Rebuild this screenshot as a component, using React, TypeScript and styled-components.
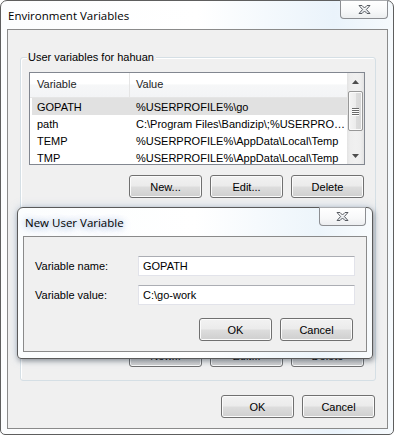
import React from "react";
import styled, { createGlobalStyle } from "styled-components";

const uiFont = `"Liberation Sans", Arial, sans-serif`;
const captionFont = `"Open Sans", "Noto Sans", sans-serif`;

const GlobalStyle = createGlobalStyle`
  html, body {
    margin: 0;
    padding: 0;
    background: #ffffff;
  }
  body {
    font-family: ${uiFont};
    font-size: 11px;
    color: #000;
  }
`;

const rows = [
    { name: "GOPATH", value: "%USERPROFILE%\\go", selected: true },
    { name: "path", value: "C:\\Program Files\\Bandizip\\;%USERPRO…" },
    { name: "TEMP", value: "%USERPROFILE%\\AppData\\Local\\Temp" },
    { name: "TMP", value: "%USERPROFILE%\\AppData\\Local\\Temp" },
];

const CloseGlyph = () => (
    <svg width="13" height="10" viewBox="0 0 13 10">
        <defs>
            <linearGradient id="xfill" x1="0" y1="0" x2="0" y2="1">
                <stop offset="0" stopColor="#ffffff" />
                <stop offset="1" stopColor="#dfe3e8" />
            </linearGradient>
        </defs>
        <polygon
            points="1,0.5 4,0.5 6.5,3 9,0.5 12,0.5 8.4,4.5 12,8.5 9,8.5 6.5,6 4,8.5 1,8.5 4.6,4.5"
            fill="url(#xfill)"
            stroke="#575b61"
            strokeWidth="1"
            strokeLinejoin="round"
        />
    </svg>
);

const Arrow = ({ up }: { up?: boolean }) => (
    <svg width="7" height="4" viewBox="0 0 7 4">
        <polygon points={up ? "0,4 7,4 3.5,0" : "0,0 7,0 3.5,4"} fill="#4d4d4d" />
    </svg>
);

const App = () => {
    return <>
        <GlobalStyle />
        <Window>
            <TitleBar>
                <Title>Environment Variables</Title>
                <CloseButton><CloseGlyph /></CloseButton>
            </TitleBar>
            <Client>
                <GroupBox>
                    <GroupLabel>User variables for hahuan</GroupLabel>
                    <ListView>
                        <ListBody>
                            <HeaderRow>
                                <HeaderCell $width={100}>Variable</HeaderCell>
                                <HeaderCell>Value</HeaderCell>
                            </HeaderRow>
                            {rows.map((row) => (
                                <Row key={row.name} $selected={!!row.selected}>
                                    <NameCell>{row.name}</NameCell>
                                    <ValueCell>{row.value}</ValueCell>
                                </Row>
                            ))}
                        </ListBody>
                        <ScrollBar>
                            <ScrollArrow><Arrow up /></ScrollArrow>
                            <Track>
                                <Thumb>
                                    <Grip /><Grip /><Grip /><Grip />
                                </Thumb>
                            </Track>
                            <ScrollArrow><Arrow /></ScrollArrow>
                        </ScrollBar>
                    </ListView>
                    <ButtonRow $top={10}>
                        <Button>New...</Button>
                        <Button>Edit...</Button>
                        <Button>Delete</Button>
                    </ButtonRow>
                    <ButtonRow $top={146}>
                        <Button>New...</Button>
                        <Button>Edit...</Button>
                        <Button>Delete</Button>
                    </ButtonRow>
                </GroupBox>
                <FooterRow>
                    <Button>OK</Button>
                    <Button>Cancel</Button>
                </FooterRow>
            </Client>

            <Dialog>
                <TitleBar>
                    <DialogTitle>New User Variable</DialogTitle>
                    <CloseButton $dialog><CloseGlyph /></CloseButton>
                </TitleBar>
                <DialogClient>
                    <FieldGrid>
                        <FieldLabel>Variable name:</FieldLabel>
                        <TextBox defaultValue="GOPATH" />
                        <FieldLabel>Variable value:</FieldLabel>
                        <TextBox defaultValue="C:\go-work" />
                    </FieldGrid>
                    <DialogButtons>
                        <Button>OK</Button>
                        <Button>Cancel</Button>
                    </DialogButtons>
                </DialogClient>
            </Dialog>
        </Window>
    </>
}

const Window = styled.div`
    position: relative;
    box-sizing: border-box;
    width: 394px;
    height: 435px;
    padding: 0 5px 5px 6px;

    display: flex;
    flex-direction: column;

    border: 1px solid #5e5e5e;
    border-radius: 7px 7px 5px 5px;
    background: linear-gradient(90deg, #fcfdfe 0%, #ffffff 50%, #eaf3fb 85%, #f6fafd 100%);
`

const TitleBar = styled.div`
    display: flex;
    justify-content: space-between;
    align-items: flex-start;
    height: 28px;
    flex-shrink: 0;
`

const Title = styled.div`
    padding-left: 1px;
    line-height: 29px;
    font-family: ${captionFont};
    font-size: 11.5px;
    color: #000;
`

const DialogTitle = styled(Title)`
    padding-left: 2px;
    text-shadow: 0 0 6px rgba(150, 180, 220, 0.9), 0 2px 7px rgba(150, 180, 220, 0.7);
`

const CloseButton = styled.div<{ $dialog?: boolean }>`
    box-sizing: border-box;
    width: ${(p) => (p.$dialog ? 47 : 48)}px;
    height: 19px;
    margin-top: -1px;
    margin-right: ${(p) => (p.$dialog ? 1 : 0)}px;

    display: flex;
    align-items: center;
    justify-content: center;

    border: 1px solid #8c8e92;
    border-top-color: #a9abae;
    border-radius: 0 0 4px 4px;
    background: linear-gradient(#ffffff 0%, #f7f8f9 60%, #eceef0 100%);
`

const Client = styled.div`
    flex: 1;
    display: flex;
    flex-direction: column;
    padding: 27px 11px 10px 12px;

    border: 1px solid #8a8a8a;
    background-color: #f0f0f0;
`

const GroupBox = styled.div`
    position: relative;
    display: flex;
    flex-direction: column;
    padding: 14px 10px 13px 8px;

    border: 1px solid #d5dfe5;
    border-radius: 3px;
    box-shadow: inset 1px 1px 0 #ffffff;
`

const GroupLabel = styled.div`
    position: absolute;
    top: -8px;
    left: 6px;
    padding: 0 2px 0 1px;
    line-height: 14px;
    background-color: #f0f0f0;
`

const ListView = styled.div`
    display: flex;
    height: 93px;
    box-sizing: border-box;
    overflow: hidden;

    border: 1px solid #828790;
    background-color: #ffffff;
`

const ListBody = styled.div`
    flex: 1;
    min-width: 0;
    overflow: hidden;
`

const HeaderRow = styled.div`
    display: flex;
    box-sizing: border-box;
    height: 25px;

    border-bottom: 1px solid #e5e5e5;
    background: linear-gradient(#ffffff 0%, #ffffff 45%, #f6f7f8 50%, #f3f4f6 100%);
`

const HeaderCell = styled.div<{ $width?: number }>`
    box-sizing: border-box;
    ${(p) => (p.$width ? `width: ${p.$width}px; border-right: 1px solid #e5e5e5;` : "flex: 1;")}
    padding-left: ${(p) => (p.$width ? 7 : 6)}px;
    line-height: 23px;
    color: #1e1e1e;
`

const Row = styled.div<{ $selected: boolean }>`
    display: flex;
    height: 17px;
    margin-left: 2px;
    align-items: center;
    background-color: ${(p) => (p.$selected ? "#e1e1e1" : "transparent")};
`

const NameCell = styled.div`
    width: 98px;
    padding-left: 5px;
    box-sizing: border-box;
    white-space: nowrap;
`

const ValueCell = styled.div`
    flex: 1;
    padding-left: 6px;
    white-space: nowrap;
    overflow: hidden;
`

const ScrollBar = styled.div`
    width: 17px;
    display: flex;
    flex-direction: column;
    background: linear-gradient(90deg, #e3e3e3 0%, #eeeeee 20%, #f0f0f0 50%, #eeeeee 80%, #e3e3e3 100%);
`

const ScrollArrow = styled.div`
    height: 17px;
    display: flex;
    align-items: center;
    justify-content: center;
`

const Track = styled.div`
    flex: 1;
    padding-top: 1px;
`

const Thumb = styled.div`
    box-sizing: border-box;
    height: 40px;
    margin: 0 1px;

    display: flex;
    flex-direction: column;
    align-items: center;
    justify-content: center;
    gap: 1px;

    border: 1px solid #979797;
    border-radius: 2px;
    background: linear-gradient(90deg, #f4f4f4 0%, #ececec 50%, #dcdcdc 51%, #d6d6d6 100%);
    box-shadow: inset 0 0 0 1px #fafafa;
`

const Grip = styled.div`
    width: 7px;
    height: 1px;
    background-color: #6a6a6a;
    box-shadow: 0 1px 0 #ffffff;
`

const ButtonRow = styled.div<{ $top: number }>`
    display: flex;
    justify-content: flex-end;
    gap: 8px;
    margin-top: ${(p) => p.$top}px;
    padding-right: 1px;
`

const FooterRow = styled.div`
    display: flex;
    justify-content: flex-end;
    gap: 8px;
    margin-top: 14px;
    padding-right: 1px;
`

const Button = styled.button`
    box-sizing: border-box;
    width: 73px;
    height: 23px;
    padding: 0;

    border: 1px solid #707070;
    border-radius: 3px;
    background: linear-gradient(#f2f2f2 0%, #ebebeb 48%, #dddddd 52%, #cfcfcf 100%);
    box-shadow: inset 0 0 0 1px #fbfbfb;

    font-family: ${uiFont};
    font-size: 11px;
    color: #000;
`

const Dialog = styled.div`
    position: absolute;
    left: 16px;
    top: 206px;
    box-sizing: border-box;
    width: 356px;
    height: 152px;
    padding: 0 5px 6px 5px;

    display: flex;
    flex-direction: column;

    border: 1px solid #5a5a5a;
    border-radius: 6px 6px 4px 4px;
    background: linear-gradient(90deg, #fbfdfe 0%, #ffffff 50%, #edf5fb 85%, #f8fbfd 100%);
    box-shadow: 1px 2px 5px rgba(0, 0, 0, 0.35), 0 0 10px rgba(120, 160, 210, 0.35);
`

const DialogClient = styled.div`
    flex: 1;
    display: flex;
    flex-direction: column;
    padding: 19px 11px 10px 11px;

    border: 1px solid #8a8a8a;
    background-color: #f0f0f0;
`

const FieldGrid = styled.div`
    display: grid;
    grid-template-columns: 103px 1fr;
    row-gap: 9px;
    align-items: center;
`

const FieldLabel = styled.div`
    line-height: 20px;
`

const TextBox = styled.input`
    box-sizing: border-box;
    width: 217px;
    height: 20px;
    padding: 0 4px;
    margin: 0;

    border: 1px solid #e2e3ea;
    border-top-color: #abadb3;
    background-color: #ffffff;
    outline: none;

    font-family: ${uiFont};
    font-size: 11px;
    color: #000;
`

const DialogButtons = styled.div`
    display: flex;
    justify-content: flex-end;
    gap: 8px;
    margin-top: 13px;
    padding-right: 2px;
`

export default App;
